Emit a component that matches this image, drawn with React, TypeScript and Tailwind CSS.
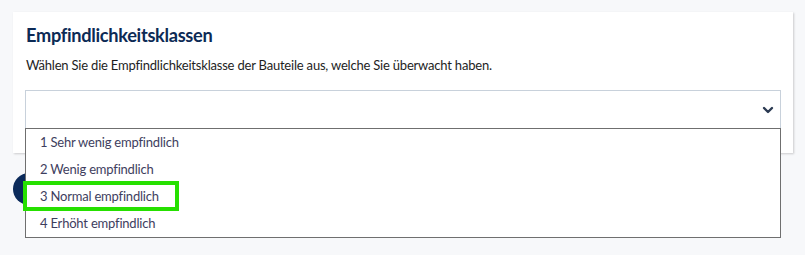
import React from "react";

const items = [
  "1 Sehr wenig empfindlich",
  "2 Wenig empfindlich",
  "3 Normal empfindlich",
  "4 Erhöht empfindlich",
];

export default function App() {
  return (
    <div
      className="relative w-[805px] h-[255px] bg-[#f7f8fa] pt-[12px] pl-[13px] overflow-hidden"
      style={{ fontFamily: "Lato, 'Open Sans', sans-serif" }}
    >
      <div className="w-[780px] h-[141px] bg-white shadow-[1px_1px_2px_rgba(0,0,0,0.18)] pt-[8px] px-[12px]">
        <h2 className="text-[18.2px] font-bold leading-[30px] text-[#0c2a55] pl-[1px] tracking-[-0.3px]">
          Empfindlichkeitsklassen
        </h2>
        <p className="mt-[6px] text-[13px] leading-[18px] text-[#1e1e1e] pl-[1px] tracking-[-0.2px]">
          Wählen Sie die Empfindlichkeitsklasse der Bauteile aus, welche Sie überwacht haben.
        </p>
        <div className="mt-[16px] h-[40px] w-[756px] border border-[#c8d1db] bg-white flex items-center justify-end pr-[6px]">
          <svg width="12" height="8" viewBox="0 0 12 8" fill="none">
            <path d="M2 2 L6 6 L10 2" stroke="#2b3a52" strokeWidth="2.4" strokeLinecap="round" strokeLinejoin="round" />
          </svg>
        </div>
      </div>
      <div className="mt-[20px] h-[32px] w-[90px] rounded-full bg-[#0b2a5a]" />
      <div className="absolute left-[25px] top-[128px] w-[756px] h-[110px] border border-[#6f6f6f] bg-white">
        {items.map((t) => (
          <div
            key={t}
            className="h-[27px] flex items-center pl-[14px] text-[13px] text-[#3e3e5e] tracking-[-0.2px]"
          >
            {t}
          </div>
        ))}
      </div>
      <div className="absolute left-[23px] top-[181px] w-[156px] h-[30px] border-[4px] border-[#26e000]" />
    </div>
  );
}
